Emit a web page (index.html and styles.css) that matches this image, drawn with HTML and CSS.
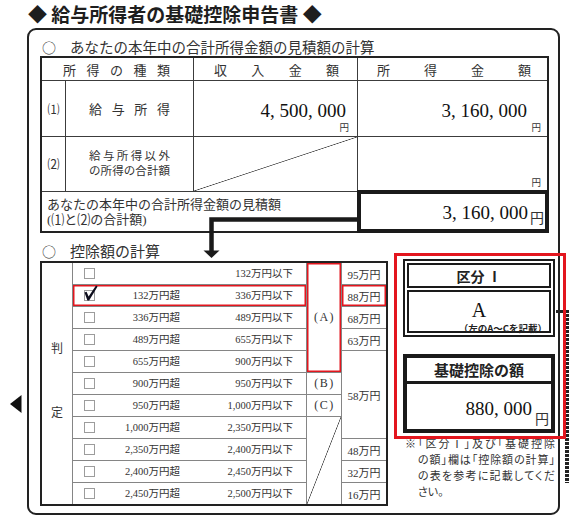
FILE: index.html
```html
<!DOCTYPE html>
<html lang="ja">
<head>
<meta charset="utf-8">
<title>給与所得者の基礎控除申告書</title>
<link rel="stylesheet" href="styles.css">
</head>
<body>
<div class="page">
  <h1 class="title">◆ 給与所得者の基礎控除申告書 ◆</h1>
  <div class="frame">
    <h2 class="sec-head"><span class="circ">○</span>あなたの本年中の合計所得金額の見積額の計算</h2>
    <div class="t1">
      <div class="h h-kind"><span>所</span><span>得</span><span>の</span><span>種</span><span>類</span></div>
      <div class="h h-inc"><span>収</span><span>入</span><span>金</span><span>額</span></div>
      <div class="h h-amt"><span>所</span><span>得</span><span>金</span><span>額</span></div>

      <div class="num">⑴</div>
      <div class="label1"><span>給</span><span>与</span><span>所</span><span>得</span></div>
      <div class="amt amt-inc"><span class="v">4, 500, 000</span><span class="yen">円</span></div>
      <div class="amt amt-out"><span class="v">3, 160, 000</span><span class="yen">円</span></div>

      <div class="num">⑵</div>
      <div class="label2"><span class="jl">給与所得以外</span><span class="jl">の所得の合計額</span></div>
      <div class="diag"></div>
      <div class="amt amt-out"><span class="yen">円</span></div>

      <div class="total-label"><span>あなたの本年中の合計所得金額の見積額</span><span>(⑴と⑵の合計額)</span></div>
      <div class="total"><span class="v">3, 160, 000</span><span class="yen-l">円</span></div>
    </div>

    <div class="sec2">
      <div class="calc">
        <h2 class="sec-head sec-head2"><span class="circ">○</span>控除額の計算</h2>
        <div class="t2">
          <div class="hantei"><span>判</span><span>定</span></div>
          <div class="rng"><span class="cb"></span><span class="lo"></span><span class="hi">132万円以下</span></div>
          <div class="abc abc-a sel">(A)</div>
          <div class="a2">95万円</div>

          <div class="rng sel"><span class="cb"><svg class="chk" width="15" height="17" viewBox="0 0 15 17"><path d="M1.5 7.5 L3.6 6.8 L5.6 11.4 L13 0.4 L14.6 1.4 L6.1 15.6 L4.4 15.6 Z" fill="#0d0d1c"/></svg></span><span class="lo">132万円超</span><span class="hi">336万円以下</span></div>
          <div class="a2 sel">88万円</div>

          <div class="rng"><span class="cb"></span><span class="lo">336万円超</span><span class="hi">489万円以下</span></div>
          <div class="a2">68万円</div>

          <div class="rng"><span class="cb"></span><span class="lo">489万円超</span><span class="hi">655万円以下</span></div>
          <div class="a2">63万円</div>

          <div class="rng"><span class="cb"></span><span class="lo">655万円超</span><span class="hi">900万円以下</span></div>
          <div class="a2 a2-58">58万円</div>

          <div class="rng"><span class="cb"></span><span class="lo">900万円超</span><span class="hi">950万円以下</span></div>
          <div class="abc">(B)</div>

          <div class="rng"><span class="cb"></span><span class="lo">950万円超</span><span class="hi">1,000万円以下</span></div>
          <div class="abc">(C)</div>

          <div class="rng"><span class="cb"></span><span class="lo">1,000万円超</span><span class="hi">2,350万円以下</span></div>
          <div class="abc-diag"></div>

          <div class="rng"><span class="cb"></span><span class="lo">2,350万円超</span><span class="hi">2,400万円以下</span></div>
          <div class="a2">48万円</div>

          <div class="rng"><span class="cb"></span><span class="lo">2,400万円超</span><span class="hi">2,450万円以下</span></div>
          <div class="a2">32万円</div>

          <div class="rng"><span class="cb"></span><span class="lo">2,450万円超</span><span class="hi">2,500万円以下</span></div>
          <div class="a2">16万円</div>
        </div>
      </div>

      <div class="panel">
        <div class="kubun">
          <div class="kubun-h">区分 Ⅰ</div>
          <div class="kubun-v"><span class="kubun-a">A</span><span class="kubun-note">（左のA〜Cを記載）</span></div>
        </div>
        <div class="kiso">
          <div class="kiso-h">基礎控除の額</div>
          <div class="kiso-v"><span class="v">880, 000</span><span class="yen-l">円</span></div>
        </div>
        <div class="note">
          <span class="mark">※</span>
          <div class="note-body">
            <span class="nl">「区分Ⅰ」及び「基礎控除</span>
            <span class="nl">の額」欄は「控除額の計算」</span>
            <span class="nl">の表を参考に記載してくだ</span>
            <span class="nl nl-last">さい。</span>
          </div>
        </div>
      </div>
    </div>
  </div>

  <svg class="arrow" width="160" height="46" viewBox="0 0 160 46">
    <path d="M158 5.5 H11.5 V38" fill="none" stroke="#1a1a1a" stroke-width="4.5"/>
    <polygon points="3.5,36.5 19.5,36.5 11.5,44" fill="#1a1a1a"/>
  </svg>
  <svg class="tri" width="12" height="18" viewBox="0 0 12 18"><polygon points="11.5,0 11.5,18 0,9" fill="#111"/></svg>
  <div class="notch"></div>
  <div class="dots"></div>
  <div class="redbox"></div>
</div>
</body>
</html>
```

FILE: styles.css
```css
* { box-sizing: border-box; margin: 0; padding: 0; }
html, body { background: #fff; }
body {
  width: 569px;
  height: 520px;
  overflow: hidden;
  font-family: "Liberation Serif", "Noto Sans CJK JP", serif;
  color: #333;
}
.page { position: relative; width: 569px; height: 520px; }

.title {
  font-family: "Noto Sans CJK JP", sans-serif;
  font-weight: 700;
  font-size: 19px;
  line-height: 28px;
  height: 28px;
  padding-left: 28px;
  color: #1e1e1e;
  white-space: nowrap;
}

.frame {
  margin-left: 27px;
  width: 533px;
  border: 2px solid #222;
  border-radius: 9px;
  padding: 8px 0 7px 11px;
}

.sec-head {
  font-family: "Noto Sans CJK JP", sans-serif;
  font-weight: 400;
  font-size: 14.5px;
  line-height: 18px;
  height: 18px;
  display: flex;
  color: #333;
  white-space: nowrap;
}
.circ { width: 30px; padding-left: 2px; font-size: 14px; }
.sec-head2 { font-size: 15px; line-height: 20px; height: 20px; }

/* table 1 */
.t1 {
  display: grid;
  width: 509px;
  grid-template-columns: 23px 127px 163px 189px;
  grid-template-rows: 22px 55px 54px 39px;
  gap: 1px;
  background: #3c3c3c;
  border: 2px solid #222;
}
.t1 > div { background: #fff; }
.h {
  display: flex;
  justify-content: space-between;
  align-items: center;
  font-size: 13px;
}
.h-kind { grid-column: 1 / span 2; padding: 0 23px 0 21px; }
.h-inc { padding: 0 18px 0 20px; }
.h-amt { padding: 0 16px 0 19px; }
.num {
  display: flex;
  align-items: center;
  justify-content: center;
  font-size: 12px;
}
.label1 {
  display: flex;
  justify-content: space-between;
  align-items: center;
  padding: 0 23px;
  font-size: 13px;
}
.label2 {
  display: flex;
  flex-direction: column;
  justify-content: center;
  align-items: center;
  font-size: 11.5px;
  line-height: 15.5px;
}
.jl {
  display: block;
  width: 81px;
  text-align: justify;
  text-align-last: justify;
  white-space: nowrap;
}
.amt {
  display: flex;
  flex-direction: column;
  justify-content: flex-end;
  align-items: flex-end;
  padding-bottom: 2px;
}
.amt .v {
  font-size: 19px;
  line-height: 22px;
  color: #111;
  white-space: nowrap;
}
.amt .yen { font-size: 9.5px; line-height: 12px; }
.amt-inc .v { padding-right: 11px; }
.amt-inc .yen { padding-right: 8px; }
.amt-out .v { padding-right: 20px; }
.amt-out .yen { padding-right: 6px; }
.diag {
  background: linear-gradient(to bottom right, #fff calc(50% - 0.7px), #444 50%, #fff calc(50% + 0.7px)) !important;
}
.total-label {
  grid-column: 1 / span 3;
  display: flex;
  flex-direction: column;
  justify-content: center;
  padding-left: 5px;
  font-size: 13px;
  line-height: 15px;
  white-space: nowrap;
}
.total {
  margin: -2px -2px -2px -1px;
  border: 4px solid #1a1a1a;
  display: flex;
  justify-content: flex-end;
  align-items: flex-end;
  padding: 0 1px 5px 0;
}
.total .v { font-size: 19px; line-height: 22px; color: #111; white-space: nowrap; }
.yen-l { font-size: 14px; line-height: 16px; margin-left: 2px; margin-bottom: -3px; }

/* section 2 */
.sec2 { display: flex; align-items: flex-start; }
.calc { width: 348px; padding-top: 8px; }

.t2 {
  display: grid;
  width: 348px;
  grid-template-columns: 30px 233px 34px 44px;
  grid-template-rows: repeat(11, 21px);
  gap: 1px;
  background: #858585;
  border: 2px solid #222;
}
.t2 > div { background: #fff; }
.hantei {
  grid-column: 1;
  grid-row: 1 / span 11;
  display: flex;
  flex-direction: column;
  align-items: center;
  justify-content: center;
  gap: 52px;
  padding-bottom: 6px;
  font-size: 12px;
  line-height: 12px;
}
.rng {
  grid-column: 2;
  display: grid;
  grid-template-columns: 11px 85px 113px;
  align-items: center;
  padding-left: 11px;
  font-size: 10.5px;
  line-height: 21px;
  white-space: nowrap;
}
.cb {
  position: relative;
  width: 11px;
  height: 11px;
  border: 1px solid #9c9c9c;
  background: #fff;
}
.chk { position: absolute; left: -2px; top: -6px; }
.lo, .hi { text-align: right; }
.abc {
  grid-column: 3;
  display: flex;
  align-items: center;
  justify-content: center;
  font-size: 12px;
  letter-spacing: 1.5px;
  padding-left: 1px;
}
.abc-a { grid-row: 1 / span 5; }
.abc-diag {
  grid-column: 3;
  grid-row: 8 / span 4;
  background: linear-gradient(to bottom right, #fff calc(50% - 0.7px), #444 50%, #fff calc(50% + 0.7px)) !important;
}
.a2 {
  grid-column: 4;
  display: flex;
  align-items: center;
  justify-content: center;
  font-size: 11px;
  white-space: nowrap;
}
.a2-58 { grid-row: 5 / span 4; }
.sel { box-shadow: inset 0 0 0 1.5px #e3161e; }

/* right panel */
.panel { margin-left: 15px; margin-top: 26px; width: 152px; }
.kubun {
  border: 2px solid #1a1a1a;
  padding: 2px;
  display: flex;
  flex-direction: column;
  gap: 2px;
}
.kubun-h {
  height: 25px;
  border: 2px solid #1a1a1a;
  display: flex;
  align-items: center;
  justify-content: center;
  font-family: "Noto Sans CJK JP", sans-serif;
  font-weight: 700;
  font-size: 14px;
  color: #222;
}
.kubun-v {
  height: 43px;
  border: 2px solid #1a1a1a;
  display: flex;
  flex-direction: column;
  align-items: center;
}
.kubun-a { font-size: 20px; line-height: 20px; margin-top: 8px; color: #111; }
.kubun-note {
  align-self: flex-end;
  padding-right: 2px;
  margin-top: 2.5px;
  font-family: "Noto Sans CJK JP", sans-serif;
  font-weight: 700;
  font-size: 9.5px;
  line-height: 10px;
  color: #222;
  white-space: nowrap;
}
.kiso {
  margin-top: 17px;
  height: 79px;
  border: 4px solid #1a1a1a;
}
.kiso-h {
  height: 26px;
  border-bottom: 3px solid #1a1a1a;
  display: flex;
  align-items: center;
  justify-content: center;
  font-family: "Noto Sans CJK JP", sans-serif;
  font-weight: 700;
  font-size: 15px;
  color: #222;
}
.kiso-v {
  height: 45px;
  display: flex;
  justify-content: flex-end;
  align-items: flex-end;
  padding: 0 2px 1px 0;
}
.kiso-v .v { font-size: 19px; line-height: 22px; margin-bottom: 8px; color: #111; white-space: nowrap; }
.kiso-v .yen-l { margin-bottom: 0; margin-left: 3px; }

.note {
  margin-top: 3px;
  display: grid;
  grid-template-columns: 15px 137px;
  font-size: 11px;
  line-height: 16px;
  color: #333;
}
.mark { padding-left: 2px; }
.nl {
  display: block;
  white-space: nowrap;
  text-align: justify;
  text-align-last: justify;
  font-feature-settings: "palt";
}
.nl-last { text-align-last: left; }

/* overlays */
.arrow { position: absolute; left: 200px; top: 214px; }
.tri { position: absolute; left: 10px; top: 395px; }
.notch { position: absolute; left: 556px; top: 310px; width: 7px; height: 3px; background: #222; }
.dots {
  position: absolute;
  left: 565px;
  top: 310px;
  width: 4px;
  height: 173px;
  background: repeating-linear-gradient(to bottom, #222 0 2.8px, transparent 2.8px 4px);
}
.redbox {
  position: absolute;
  left: 394px;
  top: 253px;
  width: 172px;
  height: 186px;
  border: 3px solid #e3161e;
}
```
